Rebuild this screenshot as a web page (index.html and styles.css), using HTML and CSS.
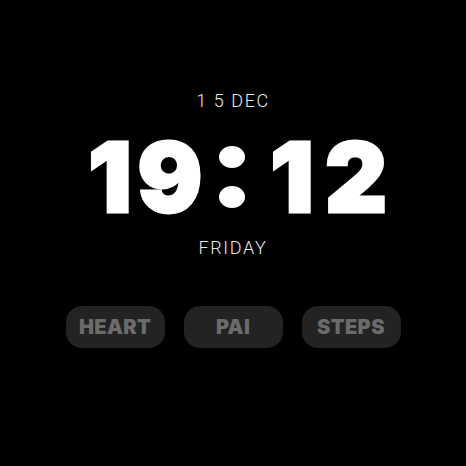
FILE: index.html
```html
<!DOCTYPE html>
<html>
<head>
<meta charset="utf-8">
<link rel="stylesheet" href="styles.css">
</head>
<body>
<main class="face">
  <div class="date">1 5 DEC</div>
  <div class="time" aria-label="19:12">
    <span class="digit one">1</span><span class="digit nine">9</span><span class="colon"><i class="dot"></i><i class="dot"></i></span><span class="digit one2">1</span><span class="digit two">2</span>
  </div>
  <div class="day">FRIDAY</div>
  <div class="buttons">
    <div class="btn">HEART</div>
    <div class="btn">PAI</div>
    <div class="btn">STEPS</div>
  </div>
</main>
</body>
</html>
```
FILE: styles.css
```css
html, body {
  margin: 0;
  padding: 0;
  background: #000;
  width: 466px;
  height: 466px;
  overflow: hidden;
}
.face {
  display: flex;
  flex-direction: column;
  align-items: center;
  padding-top: 90px;
  font-family: Inter, "Liberation Sans", sans-serif;
  color: #fff;
}
.date, .day {
  font-family: Roboto, "Liberation Sans", sans-serif;
  font-weight: 300;
  font-size: 18px;
  line-height: 22px;
  color: #e8e8e8;
  letter-spacing: 1.6px;
}
.time {
  align-self: stretch;
  display: flex;
  align-items: center;
  padding-left: 85px;
  margin-top: 15px;
  height: 100px;
  font-family: Inter, "Liberation Sans", sans-serif;
  font-weight: 900;
  font-size: 96px;
  line-height: 100px;
  -webkit-text-stroke: 3px #fff;
}
.digit {
  display: block;
  text-align: center;
}
.one { width: 50px; }
.nine { width: 70px; }
.one2 { width: 66px; }
.two { width: 60px; }
.colon {
  width: 54px;
  height: 100px;
  display: flex;
  flex-direction: column;
  align-items: center;
  justify-content: center;
  gap: 18px;
}
.dot {
  display: block;
  width: 26px;
  height: 22px;
  border-radius: 50%;
  background: #fff;
}
.day {
  margin-top: 10px;
}
.buttons {
  display: flex;
  gap: 19px;
  margin-top: 47px;
}
.btn {
  width: 99px;
  height: 42px;
  border-radius: 16px;
  background: #232323;
  color: #6b6b6b;
  font-family: Inter, "Liberation Sans", sans-serif;
  font-weight: 900;
  font-size: 20px;
  letter-spacing: 0.4px;
  display: flex;
  align-items: center;
  justify-content: center;
}
```
